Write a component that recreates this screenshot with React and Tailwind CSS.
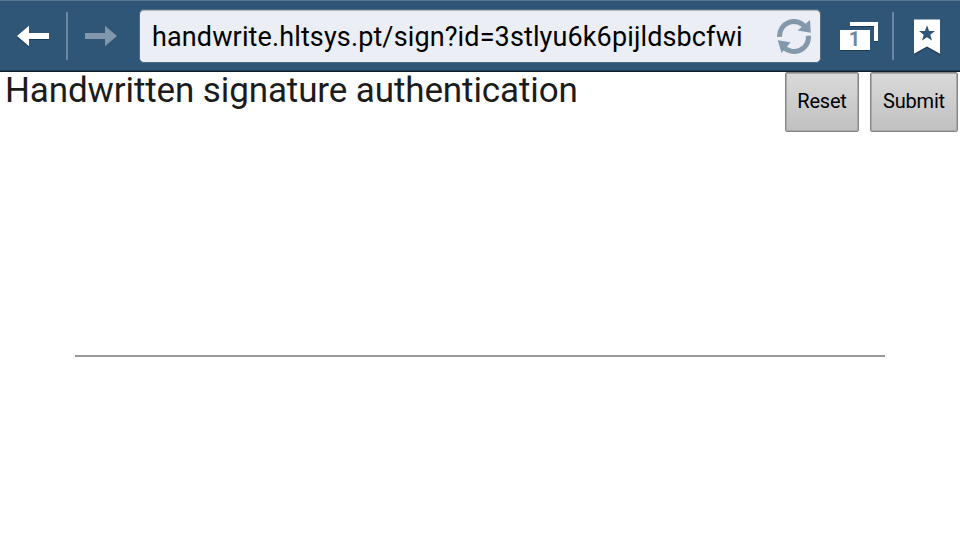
function BackArrow() {
  return (
    <svg width="66" height="70" viewBox="0 1 66 70" className="shrink-0">
      <path d="M17 37.2 29 26.8V34H49V40H29V47.6Z" fill="#173a57" />
      <path d="M17 36 29 25.8V33H49V39H29V46.2Z" fill="#fff" />
    </svg>
  );
}

function ForwardArrow() {
  return (
    <svg width="72" height="70" viewBox="68 1 72 70" className="shrink-0">
      <path d="M117 36 105 25.8V33H85V39H105V46.2Z" fill="#8097ac" />
    </svg>
  );
}

function Divider() {
  return <div className="h-12 w-0.5 shrink-0 bg-[#6c879e]" />;
}

function ReloadIcon() {
  return (
    <svg width="36" height="36" viewBox="775 19 36 36" className="mr-2 mt-0.5 shrink-0">
      <g fill="none" stroke="#8399ab" strokeWidth="5">
        <path d="M778.6 36.8A14.3 14.3 0 0 1 804.5 27.5" />
        <path d="M807.4 35.8A14.3 14.3 0 0 1 781.5 45.5" />
      </g>
      <g fill="#8399ab">
        <path d="M809 20 809.8 32.7 796.7 30.5Z" />
        <path d="M776.8 40.2 789.5 42.3 780.5 53Z" />
      </g>
    </svg>
  );
}

function Tabs() {
  return (
    <div className="relative h-[70px] w-[72px] shrink-0">
      <svg width="72" height="70" viewBox="820 1 72 70">
        <path d="M850 23H878V42H874V27H850Z M840 31H870V51H840Z" fill="#173a57" />
        <path d="M850 22H878V41H874V26H850Z M840 30H870V50H840Z" fill="#fff" />
      </svg>
      <span className="absolute left-5 top-[28px] w-[29px] text-center font-[Roboto,sans-serif] text-[20px] font-bold leading-5 text-[#73899b]">
        1
      </span>
    </div>
  );
}

function Bookmark() {
  return (
    <svg width="66" height="70" viewBox="894 1 66 70" className="shrink-0">
      <path d="M914 20.5H940V55L927 48 914 55Z" fill="#173a57" />
      <path d="M914 19.5H940V53.7L927 46.5 914 53.7Z" fill="#fff" />
      <path d="M927 25.3 929.1 31 935 31.1 930.3 34.8 932 40.6 927 37.2 922 40.6 923.7 34.8 919 31.1 924.9 31Z" fill="#2f5677" />
    </svg>
  );
}

function Button({ children, className }) {
  return (
    <button
      className={`h-[60px] rounded-xs border border-[#858585] bg-linear-to-b from-[#dadada] to-[#c0c0c0] pb-0.5 font-[Roboto,sans-serif] text-[20px] tracking-[-0.2px] text-black shadow-[inset_0_0_0_1px_#aaaaaa] ${className}`}
    >
      {children}
    </button>
  );
}

export default function App() {
  return (
    <div className="flex h-[540px] w-[960px] flex-col overflow-hidden bg-white">
      <header className="flex h-[72px] shrink-0 items-center border-t border-b border-t-[#557590] border-b-[#101a24] bg-[#2f5677] shadow-[inset_0_-1px_0_#203b53]">
        <BackArrow />
        <Divider />
        <ForwardArrow />
        <div className="-mx-px mt-2 flex h-[54px] w-[682px] shrink-0 items-center justify-between self-start rounded-[5px] border border-[#536a7e] bg-[#ebeef4] shadow-[inset_0_1px_0_#b5b8bc]">
          <span className="whitespace-nowrap pl-3 pt-0.5 font-[Roboto,sans-serif] text-[27px] leading-8 tracking-[0.125px] text-black">
            handwrite.hltsys.pt/sign?id=3stlyu6k6pijldsbcfwi
          </span>
          <ReloadIcon />
        </div>
        <Tabs />
        <Divider />
        <Bookmark />
      </header>
      <main className="flex flex-1 flex-col">
        <div className="flex h-[60px] items-start justify-between pl-[5px] pr-[2px]">
          <h1 className="mt-px whitespace-nowrap font-[Roboto,sans-serif] text-[35px] leading-9 tracking-[-0.115px] text-[#1c1c1c]">
            Handwritten signature authentication
          </h1>
          <div className="flex gap-[11px]">
            <Button className="w-[74px]">Reset</Button>
            <Button className="w-[88px]">Submit</Button>
          </div>
        </div>
        <div className="mx-[75px] mt-[223px] h-0.5 bg-[#999999]" />
      </main>
    </div>
  );
}
